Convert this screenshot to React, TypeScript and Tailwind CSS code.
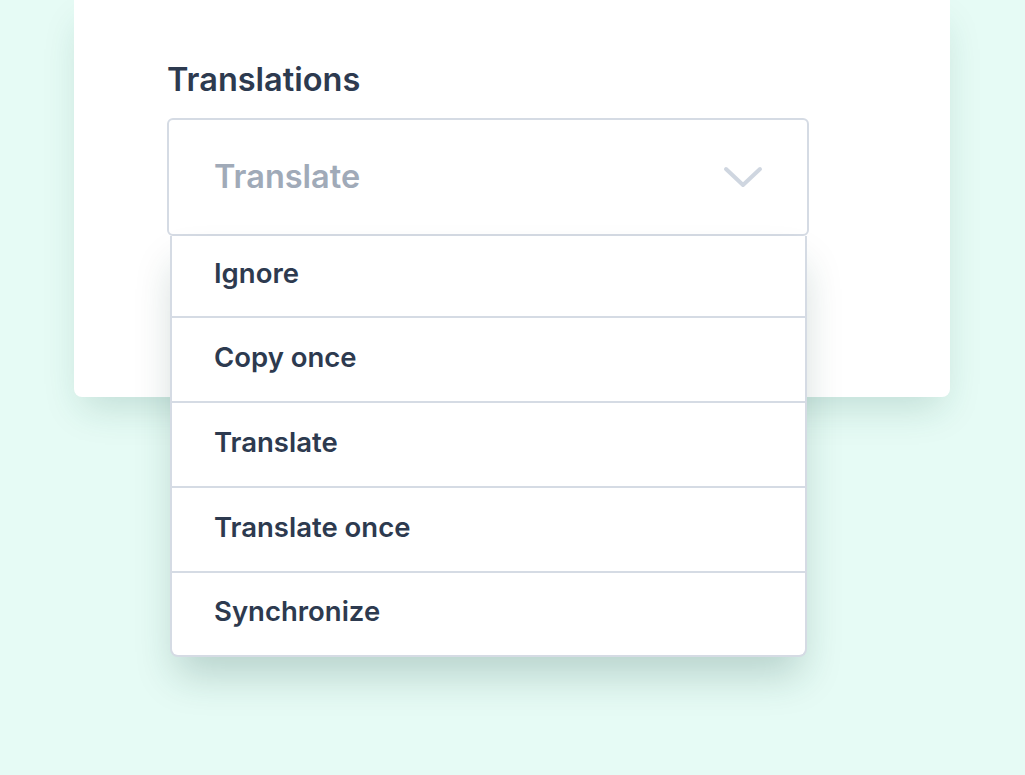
import React from 'react';

const options = ['Ignore', 'Copy once', 'Translate', 'Translate once', 'Synchronize'];

const Chevron = () => (
  <svg width="40" height="24" viewBox="0 0 40 24" fill="none">
    <path d="M3 4l17 16L37 4" stroke="#cfd6e0" strokeWidth="4" strokeLinecap="round" strokeLinejoin="round" />
  </svg>
);

export default function App() {
  return (
    <div className="h-[775px] w-full overflow-hidden bg-[#e6fbf5] font-['Inter',sans-serif]">
      <div className="ml-[74px] h-[397px] w-[876px] rounded-b-lg bg-white pl-[93px] pt-[60px] shadow-[0_18px_36px_-8px_rgba(20,90,70,0.18)]">
        <div className="text-[32.5px] font-semibold leading-[40px] text-[#2d3a4f]">Translations</div>

        <div className="relative mt-[18px] w-[642px]">
          {/* select */}
          <div className="flex h-[118px] items-center justify-between rounded-md border-2 border-[#d5dbe4] pl-[45px] pr-[44px]">
            <span className="text-[32.5px] font-semibold text-[#a0aab8]">Translate</span>
            <Chevron />
          </div>

          {/* open menu */}
          <div className="absolute left-[3px] top-full z-10 w-[637px] rounded-b-lg border-x-2 border-b-2 border-[#d5dbe4] bg-white shadow-[0_24px_40px_-6px_rgba(20,70,60,0.22)]">
            {options.map((opt, i) => (
              <div
                key={opt}
                className={
                  'flex items-center pb-1 pl-[42px] text-[27.5px] font-semibold text-[#2d3a4f]' +
                  (i === 0 ? ' h-[82px]' : i === options.length - 1 ? ' h-[82px]' : ' h-[85px]') +
                  (i < options.length - 1 ? ' border-b-2 border-[#d5dbe4]' : '')
                }
              >
                {opt}
              </div>
            ))}
          </div>
        </div>
      </div>
    </div>
  );
}
